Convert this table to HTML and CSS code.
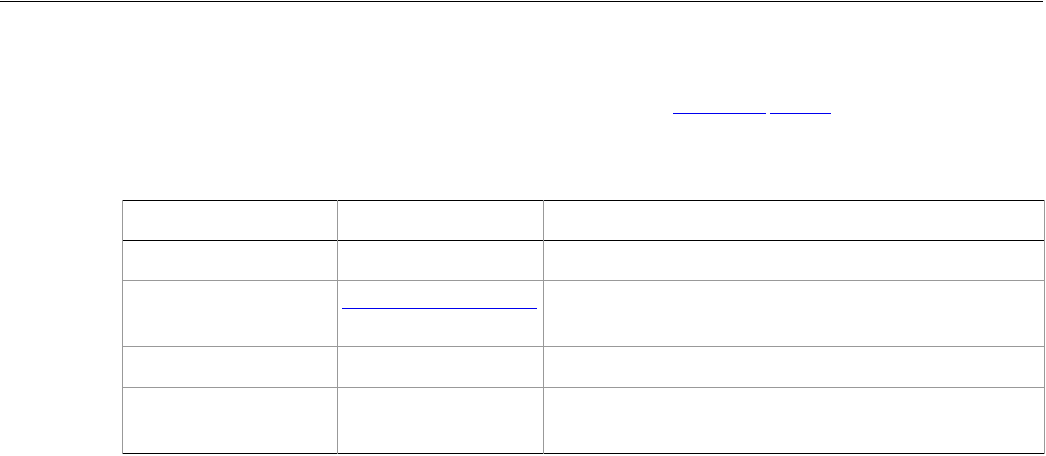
FILE: index.html
```html
<!DOCTYPE html>
<html lang="en">
  <head>
    <meta charset="UTF-8" />
    <meta name="viewport" content="width=device-width, initial-scale=1.0" />
    <title>Document</title>
    <link rel="stylesheet" href="styles.css">
  </head>
  <body>
    <div class="top-rule"></div>

    <div class="intro">
      <a class="link-line link-a" href="#"></a>
      <a class="link-line link-b" href="#"></a>
    </div>

    <table class="info-table">
      <colgroup>
        <col class="col-1" />
        <col class="col-2" />
        <col class="col-3" />
      </colgroup>
      <thead>
        <tr class="row-short">
          <th></th>
          <th></th>
          <th></th>
        </tr>
      </thead>
      <tbody>
        <tr class="row-short">
          <td></td>
          <td></td>
          <td></td>
        </tr>
        <tr class="row-tall">
          <td></td>
          <td><a class="cell-link" href="#"></a></td>
          <td></td>
        </tr>
        <tr class="row-short">
          <td></td>
          <td></td>
          <td></td>
        </tr>
        <tr class="row-tall">
          <td></td>
          <td></td>
          <td></td>
        </tr>
      </tbody>
    </table>
  </body>
</html>
```

FILE: styles.css
```css
body {
  margin: 0;
  font-family: 'Liberation Sans', Arial, sans-serif;
  font-size: 14px;
  background: #fff;
}

.top-rule {
  width: 1043px;
  height: 1px;
  margin-top: 1px;
  background-color: #000;
}

.intro {
  display: flex;
  gap: 4px;
  height: 112px;
  padding-left: 673px;
  box-sizing: border-box;
  align-items: flex-end;
}

.link-line {
  display: block;
  height: 0;
  border-bottom: 1px solid #0000ee;
}

.link-a {
  width: 93px;
}

.link-b {
  width: 61px;
}

.info-table {
  margin-top: 86px;
  margin-left: 122px;
  width: 923px;
  border-collapse: collapse;
  table-layout: fixed;
  border-top: 1px solid #000;
  border-bottom: 1px solid #000;
}

.col-1 {
  width: 215px;
}

.col-2 {
  width: 206px;
}

.info-table th,
.info-table td {
  padding: 0 4px;
  border-left: 1px solid #999;
  border-right: 1px solid #999;
  vertical-align: top;
}

.info-table thead tr {
  border-bottom: 1px solid #000;
}

.info-table tbody tr + tr {
  border-top: 1px solid #999;
}

.row-short {
  height: 41px;
}

.row-tall {
  height: 66px;
}

.row-short:first-child {
  height: 40px;
}

.cell-link {
  display: block;
  width: 195px;
  height: 27px;
  border-bottom: 1px solid #0000ee;
}
```
